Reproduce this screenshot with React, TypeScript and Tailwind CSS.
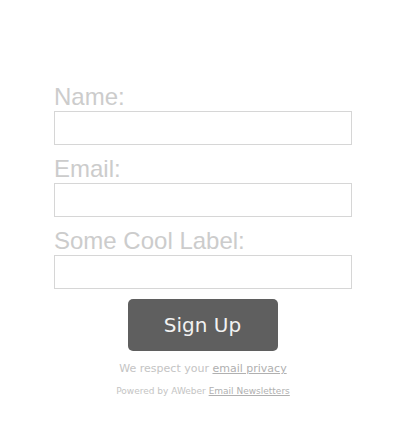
import React from "react";

const FIELDS = ["Name:", "Email:", "Some Cool Label:"];

export default function App() {
  return (
    <div className="min-h-[448px] w-[404px] bg-white pt-[83px] pl-[54px]">
      <form className="w-[298px]" onSubmit={(e) => e.preventDefault()}>
        {FIELDS.map((label) => (
          <div key={label} className="mb-[10px]">
            <label className="block text-[24px] leading-[28px] text-[#cccccc] font-['Liberation_Sans',Arial,sans-serif]">
              {label}
            </label>
            <input
              type="text"
              className="block w-[298px] h-[34px] border border-[#d6d6d6] bg-white outline-none"
            />
          </div>
        ))}

        <div className="flex justify-center">
          <button
            type="submit"
            className="ml-[-1px] w-[150px] h-[52px] rounded-[5px] bg-[#5f5f5f] text-[#f2f2f2] text-[20px] font-['DejaVu_Sans',Verdana,sans-serif]"
          >
            Sign Up
          </button>
        </div>

        <div className="mt-[10px] text-center text-[11px] leading-[16px] text-[#c4c4c4] font-['DejaVu_Sans',Tahoma,sans-serif]">
          We respect your{" "}
          <a href="#" className="underline text-[#b0b0b0]">
            email privacy
          </a>
        </div>
        <div className="mt-[8px] text-center text-[9px] leading-[13px] text-[#c4c4c4] font-['DejaVu_Sans',Tahoma,sans-serif]">
          Powered by AWeber{" "}
          <a href="#" className="underline text-[#b0b0b0]">
            Email Newsletters
          </a>
        </div>
      </form>
    </div>
  );
}
